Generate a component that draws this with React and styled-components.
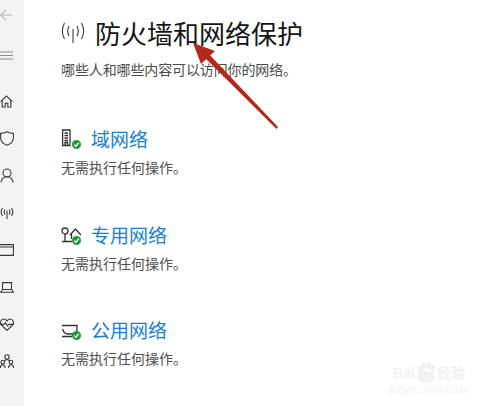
import React from 'react';
import styled, { createGlobalStyle } from 'styled-components';

const GlobalStyle = createGlobalStyle`
  html, body {
    margin: 0;
    padding: 0;
    background: #fff;
  }
  body {
    font-family: "Liberation Sans", "Noto Sans CJK SC", sans-serif;
  }
`;

const Page = styled.div`
  position: relative;
  display: flex;
  width: 500px;
  height: 406px;
  overflow: hidden;
  background: #fff;
`;

const Sidebar = styled.aside`
  width: 24px;
  flex: none;
  background: #f3f3f3;
  display: flex;
  flex-direction: column;
  align-items: flex-start;
  padding-top: 6px;
  box-sizing: border-box;
`;

const NavIcon = styled.div`
  width: 24px;
  height: ${props => props.$h || 37.3}px;
  margin-bottom: ${props => props.$mb || 0}px;
  display: flex;
  align-items: center;
  justify-content: flex-start;
  svg {
    display: block;
    fill: none;
    stroke: ${props => props.$color || '#3a3a3a'};
    stroke-width: 1.1;
  }
`;

const Main = styled.main`
  flex: 1;
  padding: 13px 0 0 37px;
`;

const Header = styled.div`
  display: flex;
  align-items: center;
  height: 39px;
  gap: 10px;
`;

const Title = styled.h1`
  margin: 0;
  font-size: 26px;
  line-height: 39px;
  font-weight: 400;
  color: #141414;
  font-family: "Noto Sans CJK SC", sans-serif;
`;

const Subtitle = styled.p`
  margin: 6px 0 0;
  font-size: 14px;
  letter-spacing: -0.12px;
  line-height: 22px;
  color: #4b4b4b;
  font-family: "Noto Sans CJK SC", sans-serif;
`;

const Networks = styled.div`
  margin-top: 44px;
  display: flex;
  flex-direction: column;
  gap: 41.5px;
`;

const Network = styled.section`
  display: flex;
  flex-direction: column;
`;

const NetworkRow = styled.div`
  display: flex;
  align-items: center;
  height: 30px;
  gap: 9px;
`;

const NetworkIcon = styled.div`
  position: relative;
  width: 21px;
  height: 20px;
  svg {
    display: block;
    fill: none;
    stroke: #333;
    stroke-width: 1.3;
  }
`;

const Check = styled.span`
  position: absolute;
  right: 1px;
  bottom: 0;
  width: 9px;
  height: 9px;
  border-radius: 50%;
  background: #1f9a3c;
  svg {
    stroke: #fff;
    stroke-width: 1.3;
  }
`;

const NetworkName = styled.a`
  font-size: 19px;
  line-height: 30px;
  color: #1a7fd0;
  font-family: "Noto Sans CJK SC", sans-serif;
`;

const Status = styled.p`
  margin: 2px 0 0;
  font-size: 14px;
  line-height: 22px;
  color: #4f4f4f;
  font-family: "Noto Sans CJK SC", sans-serif;
`;

const Arrow = styled.svg`
  position: absolute;
  left: 185px;
  top: 35px;
`;

const Watermark = styled.div`
  position: absolute;
  right: 26px;
  bottom: 11px;
  width: 90px;
  color: #f3f3f3;
  text-align: center;
  font-size: 10px;
  line-height: 11px;
`;

const WatermarkBrand = styled.div`
  display: flex;
  align-items: center;
  justify-content: center;
  gap: 1px;
  font-size: 14px;
  font-weight: 700;
  line-height: 22px;
  color: #f1f1f1;
  svg {
    display: block;
    fill: #f1f1f1;
  }
`;

const CheckBadge = () => (
  <Check>
    <svg width="9" height="9" viewBox="0 0 9 9"><path d="M2.2 4.600 3.800 6.200 6.800 2.800" /></svg>
  </Check>
);

const App = () => (
  <Page>
    <GlobalStyle />
    <Sidebar>
      <NavIcon $color="#b5b5b5" $h={18}>
        <svg width="13" height="12" viewBox="0 0 13 12"><path d="M12 6H0.8M6 0.8 0.8 6 6 11.2" /></svg>
      </NavIcon>
      <NavIcon $color="#8a8a8a" $h={62}>
        <svg width="13" height="9" viewBox="0 0 13 9"><path d="M0 1H13M0 4.500H13M0 8H13" /></svg>
      </NavIcon>
      <NavIcon $h={30} $mb={3.5}>
        <svg width="13" height="13" viewBox="0 0 13 13"><path d="M0.600 6.600 6.500 1l5.900 5.600M2.200 5.400V12h3V8.200h2.600V12h3V5.400" /></svg>
      </NavIcon>
      <NavIcon>
        <svg width="14" height="15" viewBox="0 0 14 15"><path d="M0.600 2.400C3 2.400 5 1.800 7 .7c2 1.100 4 1.700 6.400 1.700V7c0 3.400-2.400 5.800-6.400 7.300C3 12.800.6 10.400.6 7Z" /></svg>
      </NavIcon>
      <NavIcon>
        <svg width="14" height="15" viewBox="0 0 14 15"><circle cx="7" cy="5" r="4" /><path d="M1 14.500c.4-3.500 2.800-5.700 6-5.700s5.600 2.200 6 5.700" /></svg>
      </NavIcon>
      <NavIcon>
        <svg width="14" height="12" viewBox="0 0 14 12"><path d="M7 3.500V12M4.800 2.500C4 4 4 6 4.800 7.500M9.200 2.500c.8 1.500.8 3.500 0 5M2.500 1C.8 3.500.8 6.500 2.500 9M11.500 1c1.700 2.500 1.700 5.500 0 8" /></svg>
      </NavIcon>
      <NavIcon>
        <svg width="14" height="12" viewBox="0 0 14 12"><path d="M0 0.600H13.400V11.400H0M0 3H13.400" /></svg>
      </NavIcon>
      <NavIcon>
        <svg width="14" height="11" viewBox="0 0 14 11"><path d="M2.500 7.500V.6h9v6.900M0.600 10.200 2.500 7.500h9l1.900 2.700Z" /></svg>
      </NavIcon>
      <NavIcon>
        <svg width="14" height="13" viewBox="0 0 14 13"><path d="M7 12.400 1.500 7C-.5 4.800.8 1 3.800 1 5.400 1 6.300 1.900 7 3c.7-1.100 1.600-2 3.200-2 3 0 4.300 3.800 2.300 6ZM0 6.400h4.200l1.300-1.600 2 3 1.400-1.400H14" /></svg>
      </NavIcon>
      <NavIcon>
        <svg width="14" height="15" viewBox="0 0 14 15"><circle cx="7" cy="3" r="2.200" /><circle cx="2.800" cy="8" r="1.800" /><circle cx="11" cy="8" r="1.800" /><path d="M.4 14c0-2 1-3.200 2.400-3.200S5 12 5 14M8.600 14c0-2 1-3.200 2.400-3.200s2.600 1.200 2.600 3.200M4.500 7.500C5 6 6 5.500 7 5.500S9 6 9.500 7.500" /></svg>
      </NavIcon>
    </Sidebar>
    <Main>
      <Header>
        <svg width="24" height="22" viewBox="0 0 24 22" fill="none" stroke="#3a3a3a" strokeWidth="1.100">
          <path d="M12 7V21M8 4C6.500 7 6.500 11 8 14M16 4c1.500 3 1.500 7 0 10M3.500 1C.8 6 .8 12 3.500 17M20.500 1c2.700 5 2.700 11 0 16" />
        </svg>
        <Title>防火墙和网络保护</Title>
      </Header>
      <Subtitle>哪些人和哪些内容可以访问你的网络。</Subtitle>
      <Networks>
        <Network>
          <NetworkRow>
            <NetworkIcon>
              <svg width="20" height="20" viewBox="0 0 20 20"><path d="M1.600 1H9V16.500H1.600ZM3.500 4H7M3.500 6.500H7M3.500 9H7M3.500 11.500H7M4 16.500V13.500H6.500V16.500" /></svg>
              <CheckBadge />
            </NetworkIcon>
            <NetworkName>域网络</NetworkName>
          </NetworkRow>
          <Status>无需执行任何操作。</Status>
        </Network>
        <Network>
          <NetworkRow>
            <NetworkIcon>
              <svg width="20" height="20" viewBox="0 0 20 20"><circle cx="4" cy="6" r="3" /><path d="M4 9V16.500M1 16.500H11M9 10 14.500 4 20 10M10.500 9V14" /></svg>
              <CheckBadge />
            </NetworkIcon>
            <NetworkName>专用网络</NetworkName>
          </NetworkRow>
          <Status>无需执行任何操作。</Status>
        </Network>
        <Network>
          <NetworkRow>
            <NetworkIcon>
              <svg width="20" height="20" viewBox="0 0 20 20"><path d="M1 5.500H16V9C16 12 14 14 11 14H7C4 14 2.500 12 1.500 9M1 16.500H11" /></svg>
              <CheckBadge />
            </NetworkIcon>
            <NetworkName>公用网络</NetworkName>
          </NetworkRow>
          <Status>无需执行任何操作。</Status>
        </Network>
      </Networks>
    </Main>
    <Arrow width="100" height="100" viewBox="0 0 100 100">
      <path d="M93 92 91.500 94 18 21 22 17Z" fill="#b3281a" />
      <path d="M8 8 30 16 16 29Z" fill="#b3281a" />
    </Arrow>
    <Watermark>
      <WatermarkBrand>
        Bai
        <svg width="20" height="22" viewBox="0 0 20 22">
          <ellipse cx="4" cy="7" rx="2.500" ry="3.500" />
          <ellipse cx="8" cy="3.500" rx="2.500" ry="3.500" />
          <ellipse cx="13" cy="3.500" rx="2.500" ry="3.500" />
          <ellipse cx="17" cy="7" rx="2.500" ry="3.500" />
          <ellipse cx="10" cy="15" rx="9" ry="6" />
        </svg>
        经验
      </WatermarkBrand>
      jingyan.baidu.com
    </Watermark>
  </Page>
);

export default App;
